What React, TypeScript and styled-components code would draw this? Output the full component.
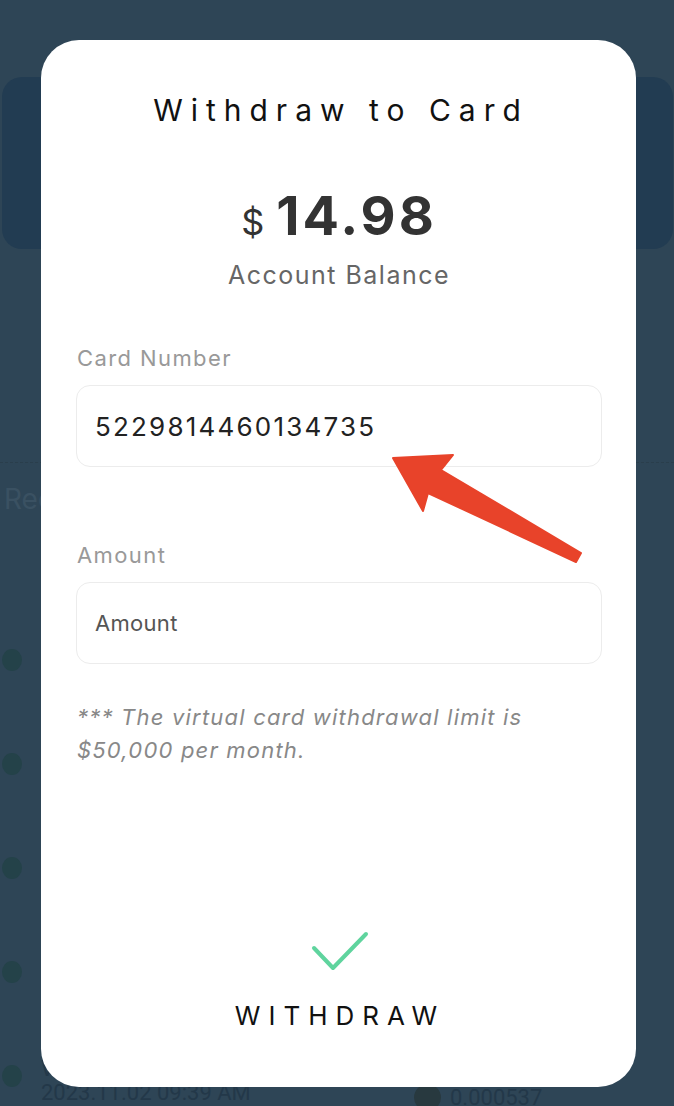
import React from "react";
import styled, { createGlobalStyle } from "styled-components";

const GlobalStyle = createGlobalStyle`
  html, body { margin: 0; padding: 0; background: #2e4556; }
  body { font-family: Inter, Roboto, "Noto Sans", sans-serif; }
  #root { width: 674px; height: 1106px; overflow: hidden; }
  * { box-sizing: border-box; }
`;

const Page = styled.div`
  position: relative;
  width: 674px;
  height: 1106px;
  overflow: hidden;
  background: #2e4556;
  display: flex;
  flex-direction: column;
  & > * {
    flex-shrink: 0;
  }
`;

const TabBar = styled.div`
  display: grid;
  grid-template-columns: 1fr 1fr;
  height: 77px;
`;

const Tab = styled.div`
  text-align: center;
  font-size: 24px;
  line-height: 28px;
  margin-top: -25px;
  color: #22384a;
`;

const BalanceCard = styled.div`
  margin-left: 2px;
  width: 671px;
  height: 172px;
  border-radius: 20px;
  background: #223c52;
`;

const Divider = styled.div`
  margin-top: 213px;
  border-top: 1px dashed #2a3e4c;
`;

const RecordsTitle = styled.div`
  margin-top: 20px;
  padding-left: 4px;
  font-size: 28px;
  line-height: 32px;
  color: #3a5162;
`;

const List = styled.div`
  margin-top: 126px;
  display: flex;
  flex-direction: column;
`;

const Row = styled.div`
  height: 104px;
  flex-shrink: 0;
  display: grid;
  grid-template-columns: 41px 373px 1fr;
  align-items: start;
`;

const Dot = styled.div`
  margin: 8px 0 0 2px;
  width: 20px;
  height: 22px;
  border-radius: 50%;
  background: #244249;
`;

const RowText = styled.div`
  display: flex;
  flex-direction: column;
`;

const RowTitle = styled.div`
  font-size: 22px;
  line-height: 22px;
  color: #233849;
`;

const RowDate = styled.div`
  font-family: Roboto, sans-serif;
  font-size: 22px;
  line-height: 26px;
  margin-top: 0.5px;
  color: #233849;
`;

const RowAmount = styled.div`
  margin-top: 27px;
  display: flex;
  align-items: center;
  gap: 9px;
  font-family: Roboto, sans-serif;
  font-size: 22px;
  line-height: 26px;
  color: #233849;
`;

const CoinIcon = styled.div`
  width: 27px;
  height: 27px;
  border-radius: 50%;
  background: #28393f;
`;

const Modal = styled.div`
  position: absolute;
  left: 41px;
  top: 40px;
  width: 595px;
  height: 1047px;
  border-radius: 38px;
  background: #ffffff;
  display: flex;
  flex-direction: column;
  padding: 52px 34px 56px 35px;
`;

const Title = styled.h1`
  margin: 0;
  text-align: center;
  font-size: 30px;
  line-height: 36px;
  font-weight: 400;
  letter-spacing: 8px;
  color: #111;
  padding-left: 4px;
`;

const AmountRow = styled.div`
  margin-top: 56px;
  height: 64px;
  display: flex;
  justify-content: center;
  align-items: baseline;
  line-height: 64px;
  color: #333;
`;

const Currency = styled.span`
  font-size: 36px;
  line-height: 36px;
  font-weight: 400;
  margin-right: 12px;
`;

const Value = styled.span`
  font-size: 54px;
  font-weight: 700;
  letter-spacing: 3px;
`;

const Caption = styled.div`
  margin-top: 12px;
  text-align: center;
  font-size: 25px;
  line-height: 30px;
  color: #666;
  letter-spacing: 1.5px;
`;

const FieldLabel = styled.label<{ $gap: number }>`
  display: block;
  margin-top: ${(p) => p.$gap}px;
  padding-left: 1px;
  font-size: 22px;
  line-height: 26px;
  color: #999;
  letter-spacing: 1.4px;
`;

const Field = styled.input<{ $filled?: boolean }>`
  margin-top: 14px;
  width: 100%;
  height: 82px;
  flex-shrink: 0;
  border: 1px solid #ececec;
  border-radius: 14px;
  padding: 0 18px;
  font-family: Inter, Roboto, sans-serif;
  font-size: ${(p) => (p.$filled ? 26 : 22)}px;
  letter-spacing: ${(p) => (p.$filled ? 2.2 : 0.3)}px;
  color: #222;
  outline: none;
  background: #fff;
  &::placeholder {
    color: #555;
  }
`;

const Note = styled.p`
  margin: 37px 0 0 1px;
  font-size: 22px;
  line-height: 33px;
  font-style: italic;
  letter-spacing: 1.2px;
  color: #888;
  padding-right: 60px;
`;

const Action = styled.button`
  margin-top: auto;
  align-self: center;
  display: flex;
  flex-direction: column;
  align-items: center;
  gap: 30px;
  border: none;
  background: transparent;
  padding: 0;
  cursor: pointer;
`;

const ActionLabel = styled.span`
  font-family: Inter, Roboto, sans-serif;
  font-size: 26px;
  line-height: 30px;
  letter-spacing: 8px;
  padding-left: 2px;
  color: #111;
`;

const Arrow = styled.svg`
  position: absolute;
  left: 385px;
  top: 450px;
  width: 205px;
  height: 120px;
  pointer-events: none;
`;

export default function App() {
  const rows = [
    { title: "Withdraw", date: "2023.11.05 10:12 AM", amount: "0.000412" },
    { title: "Withdraw", date: "2023.11.04 08:21 PM", amount: "0.000388" },
    { title: "Withdraw", date: "2023.11.03 03:45 PM", amount: "0.000501" },
    { title: "Withdraw", date: "2023.11.02 11:02 AM", amount: "0.000462" },
    { title: "Withdraw", date: "2023.11.02 09:39 AM", amount: "0.000537" },
  ];
  return (
    <Page>
      <GlobalStyle />
      <TabBar>
        <Tab>Account</Tab>
        <Tab>Card</Tab>
      </TabBar>
      <BalanceCard />
      <Divider />
      <RecordsTitle>Records</RecordsTitle>
      <List>
        {rows.map((r, i) => (
          <Row key={i}>
            <Dot />
            <RowText>
              <RowTitle>{r.title}</RowTitle>
              <RowDate>{r.date}</RowDate>
            </RowText>
            <RowAmount>
              <CoinIcon />
              {r.amount}
            </RowAmount>
          </Row>
        ))}
      </List>

      <Modal>
        <Title>Withdraw to Card</Title>
        <AmountRow>
          <Currency>$</Currency>
          <Value>14.98</Value>
        </AmountRow>
        <Caption>Account Balance</Caption>
        <FieldLabel $gap={55}>Card Number</FieldLabel>
        <Field $filled defaultValue="5229814460134735" readOnly />
        <FieldLabel $gap={75}>Amount</FieldLabel>
        <Field placeholder="Amount" />
        <Note>*** The virtual card withdrawal limit is $50,000 per month.</Note>
        <Action>
          <svg width="60" height="40" viewBox="0 0 60 40">
            <polyline
              points="5,17 24,37 57,3"
              fill="none"
              stroke="#5fd49e"
              strokeWidth="4"
              strokeLinecap="round"
              strokeLinejoin="round"
            />
          </svg>
          <ActionLabel>WITHDRAW</ActionLabel>
        </Action>
      </Modal>

      <Arrow viewBox="0 0 205 120">
        <polygon
          points="8,8 68,5 56,20 196,103 191,112 43,43 38,61"
          fill="#e8432a"
          stroke="#e8432a"
          strokeWidth="2"
          strokeLinejoin="round"
        />
      </Arrow>
    </Page>
  );
}
